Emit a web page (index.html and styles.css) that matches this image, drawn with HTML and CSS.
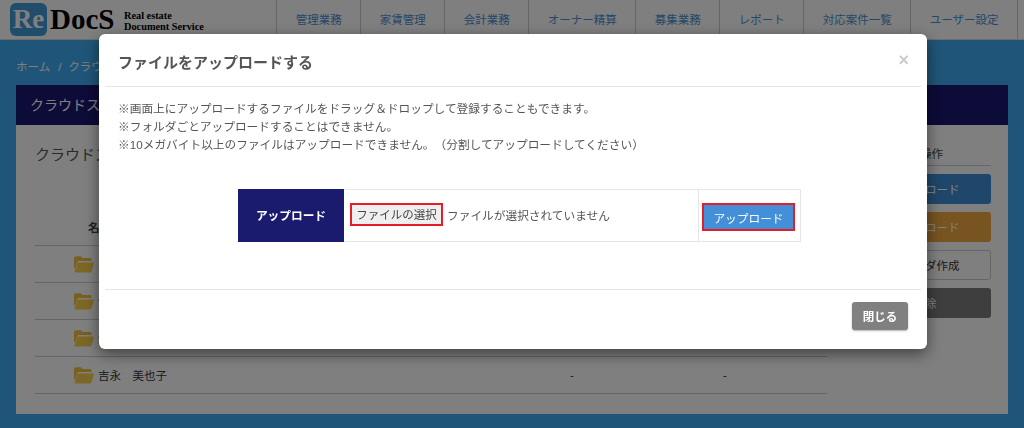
FILE: index.html
```html
<!DOCTYPE html>
<html lang="ja">
<head>
<meta charset="utf-8">
<title>ReDocS</title>
<link rel="stylesheet" href="styles.css">
</head>
<body>
<header class="topbar">
  <div class="brand">
    <span class="brand-mark">Re</span>
    <span class="brand-name">DocS</span>
    <span class="brand-tag">Real estate<br>Document Service</span>
  </div>
  <nav class="nav">
    <a class="nav-item">管理業務</a>
    <a class="nav-item">家賃管理</a>
    <a class="nav-item">会計業務</a>
    <a class="nav-item">オーナー精算</a>
    <a class="nav-item">募集業務</a>
    <a class="nav-item">レポート</a>
    <a class="nav-item">対応案件一覧</a>
    <a class="nav-item">ユーザー設定</a>
  </nav>
</header>
<main class="page">
  <div class="crumbs">ホーム<span class="crumb-sep">/</span>クラウド</div>
  <section class="panel">
    <h1 class="panel-title">クラウドストレージ</h1>
    <div class="panel-body">
      <div class="files">
        <h2 class="files-title">クラウドストレージ</h2>
        <div class="file-head"><span class="file-head-name">名前</span></div>
        <div class="file-row"><svg class="folder" viewBox="0 0 20 17"><use href="#folder"/></svg><span class="file-name">山田　太郎</span><span class="cell">-</span><span class="cell">-</span></div>
        <div class="file-row"><svg class="folder" viewBox="0 0 20 17"><use href="#folder"/></svg><span class="file-name">佐藤　一郎</span><span class="cell">-</span><span class="cell">-</span></div>
        <div class="file-row"><svg class="folder" viewBox="0 0 20 17"><use href="#folder"/></svg><span class="file-name">鈴木　花子</span><span class="cell">-</span><span class="cell">-</span></div>
        <div class="file-row"><svg class="folder" viewBox="0 0 20 17"><use href="#folder"/></svg><span class="file-name">吉永　美也子</span><span class="cell">-</span><span class="cell">-</span></div>
      </div>
      <aside class="ops">
        <div class="ops-title">操作</div>
        <button class="op op-blue">アップロード</button>
        <button class="op op-orange">ダウンロード</button>
        <button class="op op-white">フォルダ作成</button>
        <button class="op op-dark">削除</button>
      </aside>
    </div>
  </section>
</main>

<svg class="defs" width="0" height="0" aria-hidden="true">
  <symbol id="folder" viewBox="0 0 20 17">
    <path fill="#f0c040" d="M0 2.2C0 1 .8.2 2 .2h4.2c.8 0 1.3.4 1.7 1L8.5 2H16c1 0 1.6.6 1.6 1.5V5H5.2c-1 0-1.6.5-2 1.4L1 12.6H.8L0 12z"/>
    <path fill="#f7d04a" d="M4.6 6.4h14.6c.6 0 .9.4.7 1l-2.5 8c-.2.7-.8 1.2-1.6 1.2H1.4c-.8 0-1.2-.5-.9-1.2l3-8.6c.2-.3.6-.4 1.1-.4z"/>
  </symbol>
</svg>

<div class="overlay">
  <div class="modal">
    <div class="modal-head">
      <h3 class="modal-title">ファイルをアップロードする</h3>
      <span class="modal-close">×</span>
    </div>
    <div class="modal-body">
      <p class="notes">※画面上にアップロードするファイルをドラッグ＆ドロップして登録することもできます。<br>※フォルダごとアップロードすることはできません。<br>※10メガバイト以上のファイルはアップロードできません。（分割してアップロードしてください）</p>
      <div class="upload">
        <div class="upload-label">アップロード</div>
        <div class="upload-file">
          <button class="file-btn">ファイルの選択</button>
          <span class="file-state">ファイルが選択されていません</span>
        </div>
        <div class="upload-action"><button class="send-btn">アップロード</button></div>
      </div>
    </div>
    <div class="modal-foot"><button class="close-btn">閉じる</button></div>
  </div>
</div>
</body>
</html>
```
FILE: styles.css
```css
* { box-sizing: border-box; }
html, body { height: 100%; }
body {
  margin: 0;
  height: 428px;
  overflow: hidden;
  background: #3fabf0;
  color: #555;
  font-family: "Liberation Sans", "Noto Sans CJK JP", sans-serif;
  font-size: 11.5px;
  text-spacing-trim: space-all;
}
h1, h2, h3, p { margin: 0; font-weight: normal; }
button { font-family: inherit; border: 0; padding: 0; }
.defs { position: absolute; }

.topbar {
  display: flex;
  justify-content: space-between;
  height: 40px;
  padding-right: 6px;
  border-bottom: 1px solid #ddd;
  background: #fff;
}
.brand {
  display: flex;
  align-items: flex-start;
  padding: 3px 0 0 10px;
  width: 279px;
  font-family: "Liberation Serif", "DejaVu Serif", serif;
  font-weight: bold;
  color: #000;
}
.brand-mark {
  flex: none;
  width: 37px;
  height: 33px;
  margin-right: 3px;
  border-radius: 6px;
  background: #3f9ad6;
  color: #fff;
  font-size: 27px;
  line-height: 32px;
  text-align: center;
}
.brand-name { flex: none; width: 74px; font-size: 29px; line-height: 32px; }
.brand-tag { font-size: 10.3px; line-height: 11px; padding-top: 7px; white-space: nowrap; }
.nav { display: flex; border-left: 1px solid #ccc; }
.nav-item {
  display: flex;
  align-items: center;
  justify-content: center;
  padding: 0 18.5px 2px;
  border-right: 1px solid #ccc;
  color: #4a90d0;
  white-space: nowrap;
}

.page { padding: 0 16px; }
.crumbs { height: 45px; padding-top: 19px; color: #fff; line-height: 16px; white-space: nowrap; }
.crumb-sep { margin: 0 7px 0 8px; }
.panel { height: 329px; background: #fff; }
.panel-title {
  height: 40px;
  padding-left: 14px;
  background: #1a1670;
  color: #fff;
  font-size: 14px;
  line-height: 40px;
}
.panel-body { display: flex; justify-content: space-between; padding: 0 17px 0 19px; }
.files { width: 792px; }
.files-title { height: 84px; padding-top: 20px; font-size: 15px; line-height: 20px; color: #555; }
.file-head, .file-row { display: flex; align-items: center; border-bottom: 1px solid #ccc; }
.file-head { height: 37px; padding-left: 53px; font-weight: bold; color: #444; }
.file-row { height: 37px; padding-left: 39px; color: #333; }
.folder { width: 20px; height: 17px; margin-right: 4px; flex: none; }
.file-name { flex: none; width: 472px; }
.cell { flex: none; width: 153px; }
.ops { width: 132px; padding-top: 21px; }
.ops-title { height: 20px; margin-bottom: 8px; padding-left: 61px; border-bottom: 1px solid #ccc; color: #444; line-height: 17px; white-space: nowrap; }
.op {
  display: block;
  width: 132px;
  height: 30px;
  margin-bottom: 8px;
  border-radius: 3px;
  color: #fff;
  font-size: 11.5px;
  white-space: nowrap;
}
.op-blue { background: #3f8fd6; }
.op-orange { background: #f0a840; }
.op-white { background: #fff; border: 1px solid #ccc; color: #333; }
.op-dark { background: #7c7c7c; }

.overlay { position: fixed; inset: 0; background: rgba(0, 0, 0, .5); }
.modal {
  position: absolute;
  left: 99px;
  top: 34px;
  width: 828px;
  height: 315px;
  padding: 0 6px;
  background: #fff;
  border-radius: 6px;
  box-shadow: 0 5px 15px rgba(0, 0, 0, .5);
}
.modal-head {
  display: flex;
  align-items: center;
  justify-content: space-between;
  height: 53px;
  padding: 2px 12px 0 13px;
  border-bottom: 1px solid #e5e5e5;
}
.modal-title { font-size: 15px; font-weight: bold; color: #555; }
.modal-close { font-size: 18px; font-weight: bold; color: #ccc; margin-top: -2px; }
.modal-body { height: 202px; padding: 13px 13px 0; }
.notes { font-size: 11.7px; line-height: 18px; color: #555; }
.upload {
  display: flex;
  width: 563px;
  height: 53px;
  margin: 35px 0 0 120px;
  border: 1px solid #e6e6e6;
}
.upload-label {
  width: 106px;
  margin: -1px 0 -1px -1px;
  background: #1a1a6e;
  color: #fff;
  font-size: 11.7px;
  font-weight: bold;
  line-height: 53px;
  text-align: center;
}
.upload-file {
  display: flex;
  align-items: center;
  gap: 4px;
  width: 355px;
  padding: 0 6px 2px;
  border-right: 1px solid #e6e6e6;
}
.file-btn {
  width: 93px;
  height: 23px;
  background: #efefef;
  border: 2px solid #e81c24;
  color: #444;
  font-size: 11.5px;
  line-height: 18px;
}
.file-state { font-size: 11.7px; color: #555; }
.upload-action { padding-top: 13px; padding-left: 3px; }
.send-btn {
  display: block;
  width: 93px;
  height: 28px;
  background: #4390d8;
  border: 2px solid #e81c24;
  color: #fff;
  font-size: 11.7px;
}
.modal-foot {
  display: flex;
  justify-content: flex-end;
  height: 60px;
  padding: 12px 13px 0 0;
  border-top: 1px solid #e5e5e5;
}
.close-btn {
  width: 56px;
  height: 28px;
  border-radius: 3px;
  background: #808080;
  color: #fff;
  font-size: 11.5px;
  font-weight: bold;
  box-shadow: 0 1px 2px rgba(0, 0, 0, .3);
}
```
